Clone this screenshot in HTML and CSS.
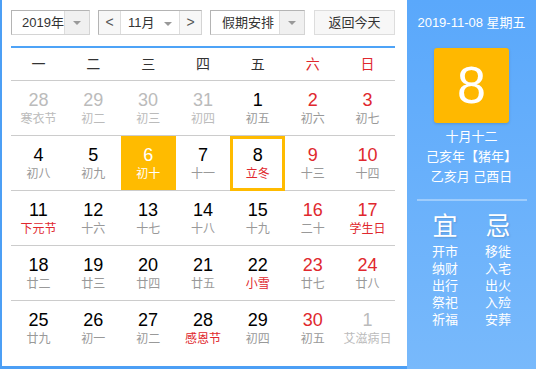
FILE: index.html
```html
<!DOCTYPE html>
<html lang="zh-CN">
<head>
    <meta charset="UTF-8">
    <title>万年历</title>
    <link rel="stylesheet" href="styles.css">
</head>
<body>
    <div class="calendar">
        <div class="main">
            <div class="toolbar">
                <div class="select year-select">
                    <span class="select-label">2019年</span>
                    <span class="select-arrow"><i class="tri"></i></span>
                </div>
                <div class="select month-select">
                    <span class="step">&lt;</span>
                    <span class="month-label">11月 <i class="tri"></i></span>
                    <span class="step">&gt;</span>
                </div>
                <div class="select holiday-select">
                    <span class="select-label">假期安排</span>
                    <span class="select-arrow"><i class="tri"></i></span>
                </div>
                <div class="today-btn">返回今天</div>
            </div>

            <div class="week-head">
                <span>一</span><span>二</span><span>三</span><span>四</span><span>五</span>
                <span class="red">六</span><span class="red">日</span>
            </div>

            <div class="days">
                <div class="day other"><b>28</b><em>寒衣节</em></div>
                <div class="day other"><b>29</b><em>初二</em></div>
                <div class="day other"><b>30</b><em>初三</em></div>
                <div class="day other"><b>31</b><em>初四</em></div>
                <div class="day"><b>1</b><em>初五</em></div>
                <div class="day weekend"><b>2</b><em>初六</em></div>
                <div class="day weekend"><b>3</b><em>初七</em></div>

                <div class="day"><b>4</b><em>初八</em></div>
                <div class="day"><b>5</b><em>初九</em></div>
                <div class="day selected"><b>6</b><em>初十</em></div>
                <div class="day"><b>7</b><em>十一</em></div>
                <div class="day today"><b>8</b><em class="fest">立冬</em></div>
                <div class="day weekend"><b>9</b><em>十三</em></div>
                <div class="day weekend"><b>10</b><em>十四</em></div>

                <div class="day"><b>11</b><em class="fest">下元节</em></div>
                <div class="day"><b>12</b><em>十六</em></div>
                <div class="day"><b>13</b><em>十七</em></div>
                <div class="day"><b>14</b><em>十八</em></div>
                <div class="day"><b>15</b><em>十九</em></div>
                <div class="day weekend"><b>16</b><em>二十</em></div>
                <div class="day weekend"><b>17</b><em class="fest">学生日</em></div>

                <div class="day"><b>18</b><em>廿二</em></div>
                <div class="day"><b>19</b><em>廿三</em></div>
                <div class="day"><b>20</b><em>廿四</em></div>
                <div class="day"><b>21</b><em>廿五</em></div>
                <div class="day"><b>22</b><em class="fest">小雪</em></div>
                <div class="day weekend"><b>23</b><em>廿七</em></div>
                <div class="day weekend"><b>24</b><em>廿八</em></div>

                <div class="day"><b>25</b><em>廿九</em></div>
                <div class="day"><b>26</b><em>初一</em></div>
                <div class="day"><b>27</b><em>初二</em></div>
                <div class="day"><b>28</b><em class="fest">感恩节</em></div>
                <div class="day"><b>29</b><em>初四</em></div>
                <div class="day weekend"><b>30</b><em>初五</em></div>
                <div class="day other"><b>1</b><em>艾滋病日</em></div>
            </div>
        </div>

        <div class="side">
            <div class="side-date">2019-11-08 星期五</div>
            <div class="big-day">8</div>
            <div class="lunar">
                <p>十月十二</p>
                <p>己亥年【猪年】</p>
                <p>乙亥月 己酉日</p>
            </div>
            <div class="side-line"></div>
            <div class="almanac">
                <div class="alm-col">
                    <h2>宜</h2>
                    <p>开市</p><p>纳财</p><p>出行</p><p>祭祀</p><p>祈福</p>
                </div>
                <div class="alm-col">
                    <h2>忌</h2>
                    <p>移徙</p><p>入宅</p><p>出火</p><p>入殓</p><p>安葬</p>
                </div>
            </div>
        </div>
    </div>
</body>
</html>
```

FILE: styles.css
```css
body {
    margin: 0;
    padding: 0;
    font-family: "Liberation Sans", "Noto Sans CJK SC", sans-serif;
    color: #333;
    background: #fff;
}
.calendar {
    display: flex;
    width: 536px;
    height: 369px;
}
.main {
    width: 396px;
    border-left: 2px solid #4c9ff5;
    border-bottom: 3px solid #4c9ff5;
    padding: 10px 12px 0 9px;
    width: 384px;
    box-sizing: content-box;
}
.toolbar {
    display: flex;
    height: 25px;
    margin-bottom: 11px;
    font-size: 13px;
}
.select {
    display: flex;
    height: 25px;
    box-sizing: border-box;
    border: 1px solid #b4b4b4;
    border-right-color: #d4d4d4;
    border-bottom-color: #d4d4d4;
    background: #fff;
    margin-right: 8px;
}
.select-label {
    flex: 1;
    line-height: 23px;
    padding-left: 10px;
}
.select-arrow {
    width: 24px;
    border-left: 1px solid #ddd;
    background: #f0f0f0;
    display: flex;
    align-items: center;
    justify-content: center;
}
.tri {
    display: inline-block;
    width: 0;
    height: 0;
    border-left: 4px solid transparent;
    border-right: 4px solid transparent;
    border-top: 4px solid #999;
    vertical-align: middle;
}
.year-select {
    width: 79px;
}
.year-select .select-label {
    padding-left: 10px;
}
.month-select {
    width: 104px;
}
.step {
    width: 21px;
    text-align: center;
    line-height: 22px;
    font-size: 14px;
    color: #555;
    background: #f7f7f7;
}
.month-label {
    flex: 1;
    text-align: center;
    line-height: 23px;
    border-left: 1px solid #ddd;
    border-right: 1px solid #ddd;
}
.month-label .tri {
    margin-left: 6px;
}
.holiday-select {
    width: 95px;
    margin-right: 9px;
}
.holiday-select .select-label {
    padding-left: 11px;
}
.today-btn {
    width: 81px;
    height: 25px;
    box-sizing: border-box;
    border: 1px solid #ddd;
    background: #f7f7f7;
    text-align: center;
    line-height: 23px;
    margin-right: 0;
}
.week-head {
    display: grid;
    grid-template-columns: repeat(7, 1fr);
    border-top: 2px solid #4ea3f7;
    border-bottom: 1px solid #ccc;
    height: 32px;
    line-height: 32px;
    font-size: 14px;
    text-align: center;
    color: #333;
}
.red {
    color: #e0282e;
}
.days {
    display: grid;
    grid-template-columns: repeat(7, 1fr);
    grid-auto-rows: 55px;
}
.day {
    border-bottom: 1px solid #ccc;
    text-align: center;
    padding-top: 9px;
    box-sizing: border-box;
    position: relative;
}
.days .day:nth-last-child(-n+7) {
    border-bottom: none;
}
.day b {
    display: block;
    font-weight: normal;
    font-size: 18px;
    line-height: 20px;
    color: #000;
}
.day em {
    display: block;
    font-style: normal;
    font-size: 12px;
    line-height: 18px;
    color: #999;
}
.day.weekend b {
    color: #e0282e;
}
.day.other b {
    color: #bbb;
}
.day.other em {
    color: #bbb;
}
.day em.fest {
    color: #e0282e;
}
.day.selected {
    background: #ffbb00;
}
.day.selected b,
.day.selected em {
    color: #fff;
}
.day.today {
    border: 3px solid #ffbb00;
    padding-top: 6px;
}
.side {
    flex: 1;
    background: linear-gradient(#5aa8fb, #78b9fb);
    color: #fff;
    text-align: center;
    display: flex;
    flex-direction: column;
    align-items: center;
}
.side-date {
    margin-top: 15px;
    font-size: 13px;
    line-height: 16px;
}
.big-day {
    margin-top: 17px;
    width: 75px;
    height: 75px;
    border-radius: 3px;
    background: #ffb800;
    box-shadow: 0 1px 3px rgba(0, 0, 0, 0.15);
    font-size: 52px;
    line-height: 75px;
}
.lunar {
    margin-top: 4px;
    font-size: 13px;
}
.lunar p {
    margin: 0;
    line-height: 20px;
}
.side-line {
    margin-top: 12px;
    width: 110px;
    height: 2px;
    background: rgba(255, 255, 255, 0.35);
}
.almanac {
    display: flex;
    gap: 27px;
    margin-top: 10px;
}
.alm-col h2 {
    margin: 0 0 2px;
    font-weight: normal;
    font-size: 25px;
    line-height: 30px;
    text-shadow: 1px 1px 2px rgba(0, 0, 0, 0.15);
}
.alm-col p {
    margin: 0;
    font-size: 13px;
    line-height: 17px;
}
```
